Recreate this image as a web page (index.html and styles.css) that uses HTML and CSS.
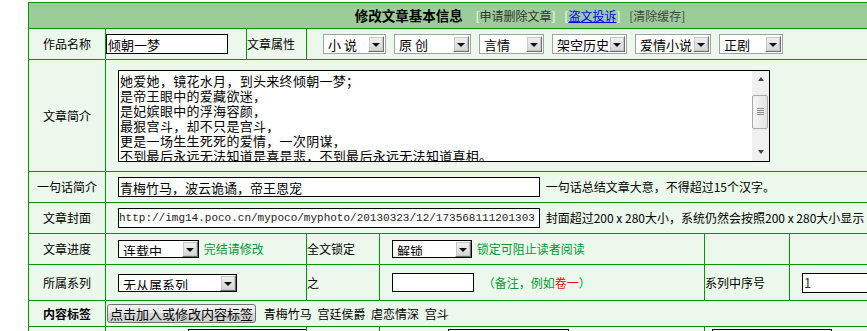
FILE: index.html
```html
<!DOCTYPE html>
<html lang="zh-CN">
<head>
    <meta charset="UTF-8">
    <title>修改文章基本信息</title>
    <link rel="stylesheet" href="styles.css">
</head>
<body>

    <!-- 文章基本信息表单 -->
    <table class="edit">
        <colgroup>
            <col class="c1"><col class="c2"><col class="c3"><col class="c4"><col class="c5"><col class="c6"><col class="c7">
        </colgroup>

        <tr class="head">
            <td colspan="7">
                <b class="title">修改文章基本信息</b>
                <span class="hlink"><i>[</i>申请删除文章<i>]</i></span>
                <span class="hlink"><i>[</i><a href="#">盗文投诉</a><i>]</i></span>
                <span class="hlink dark">[清除缓存]</span>
            </td>
        </tr>

        <tr class="r1">
            <th>作品名称</th>
            <td><input type="text" class="txt name" value="倾朝一梦"></td>
            <td>文章属性</td>
            <td colspan="4" class="pad16">
                <div class="attrs">
                    <span class="sel soft w63"><select><option>小 说</option></select></span>
                    <span class="sel soft w77"><select><option>原 创</option></select></span>
                    <span class="sel soft w65"><select><option>言情</option></select></span>
                    <span class="sel soft w75"><select><option>架空历史</option></select></span>
                    <span class="sel soft w76"><select><option>爱情小说</option></select></span>
                    <span class="sel soft w64"><select><option>正剧</option></select></span>
                </div>
            </td>
        </tr>

        <tr class="r2">
            <th>文章简介</th>
            <td colspan="6" class="pad12">
                <div class="intro-box">
                    <textarea class="intro">她爱她，镜花水月，到头来终倾朝一梦；
是帝王眼中的爱藏欲迷，
是妃嫔眼中的浮海容颜，
最狠宫斗，却不只是宫斗，
更是一场生生死死的爱情，一次阴谋，
不到最后永远无法知道是喜是悲，不到最后永远无法知道真相。</textarea>
                    <!-- barra de desplazamiento clásica -->
                    <div class="vbar">
                        <span class="arrow up"></span>
                        <div class="track"><div class="thumb"><i></i><i></i><i></i><i></i></div></div>
                        <span class="arrow down"></span>
                    </div>
                </div>
            </td>
        </tr>

        <tr class="r3">
            <th>一句话简介</th>
            <td colspan="6" class="pad12">
                <input type="text" class="txt wide" value="青梅竹马，波云诡谲，帝王恩宠">
                <span class="note">一句话总结文章大意，不得超过15个汉字。</span>
            </td>
        </tr>

        <tr class="r3">
            <th>文章封面</th>
            <td colspan="6" class="pad12">
                <input type="text" class="txt wide url" value="http://img14.poco.cn/mypoco/myphoto/20130323/12/173568111201303">
                <span class="note">封面超过200 x 280大小，系统仍然会按照200 x 280大小显示</span>
            </td>
        </tr>

        <tr class="r3">
            <th>文章进度</th>
            <td colspan="2" class="pad12">
                <span class="sel w81"><select><option>连载中</option></select></span>
                <span class="green">完结请修改</span>
            </td>
            <td>全文锁定</td>
            <td class="pad12">
                <span class="sel w80"><select><option>解锁</option></select></span>
                <span class="green">锁定可阻止读者阅读</span>
            </td>
            <td></td>
            <td></td>
        </tr>

        <tr class="r6">
            <th>所属系列</th>
            <td colspan="2" class="pad12">
                <span class="sel w119"><select><option>无从属系列</option></select></span>
            </td>
            <td>之</td>
            <td class="pad12">
                <input type="text" class="txt vol">
                <span class="green ml">（备注，例如<em>卷一</em>）</span>
            </td>
            <td>系列中序号</td>
            <td class="pad12"><input type="text" class="txt num" value="1"></td>
        </tr>

        <tr class="r7">
            <th class="bold">内容标签</th>
            <td colspan="6" class="pad1">
                <button type="button">点击加入或修改内容标签</button>
                <span class="tags">青梅竹马 宫廷侯爵 虐恋情深 宫斗</span>
            </td>
        </tr>

        <tr class="r8">
            <th></th>
            <td colspan="2"><input type="text" class="txt b1"></td>
            <td></td>
            <td><input type="text" class="txt b2"></td>
            <td colspan="2"><input type="text" class="txt b3"></td>
        </tr>
    </table>

</body>
</html>
```

FILE: styles.css
```css
html, body {
    margin: 0;
    overflow: hidden;
}

body {
    background-color: #fff;
    padding: 2px 0 0 28px;
    font-family: "Noto Sans CJK SC", "Liberation Sans", sans-serif;
    font-size: 12px;
    line-height: 16px;
    color: #000;
}

/* Tabla principal */
.edit {
    border-collapse: collapse;
    table-layout: fixed;
    width: 989px;
    background-color: #edf8ec;
}

.c1 { width: 77px; }
.c2 { width: 141px; }
.c3 { width: 60px; }
.c4 { width: 73px; }
.c5 { width: 325px; }
.c6 { width: 85px; }
.c7 { width: 228px; }

.edit td, .edit th {
    border: 1px solid #009900;
    padding: 0;
    font-weight: normal;
    text-align: left;
    vertical-align: middle;
    white-space: nowrap;
    overflow: hidden;
}

.edit th {
    text-align: center;
}

.edit th.bold {
    font-weight: bold;
}

.pad1 { padding-left: 1px !important; }
.pad12 { padding-left: 12px !important; }
.pad16 { padding-left: 16px !important; }

/* Filas */
.head td {
    height: 25px;
    background-color: #9ccc99;
    text-align: center;
}

.r1 td, .r1 th { height: 30px; }
.r2 td, .r2 th { height: 111px; }
.r3 td, .r3 th { height: 30px; }
.r6 td, .r6 th { height: 35px; }
.r7 td, .r7 th { height: 25px; }
.r8 td, .r8 th {
    height: 20px;
    vertical-align: top;
    padding-top: 2px;
}

/* Cabecera */
.title {
    font-size: 13.5px;
    margin-right: 10px;
}

.hlink {
    color: #333;
    margin-right: 6px;
}

.hlink i {
    font-style: normal;
    color: #fff;
}

.hlink a {
    color: #0000ff;
}

.hlink.dark {
    color: #444;
}

/* Campos */
.txt {
    box-sizing: border-box;
    height: 20px;
    border: 1px solid #000;
    padding: 0 1px;
    margin: 0;
    font-family: "Noto Sans CJK SC", sans-serif;
    font-size: 13px;
    background-color: #fff;
    vertical-align: middle;
}

.name { width: 122px; }
.wide { width: 422px; }
.vol { width: 82px; height: 19px; }
.num { width: 120px; color: #333; }
.b1 { width: 120px; margin-left: 82px; }
.b2 { width: 121px; margin-left: 68px; }
.b3 { width: 120px; margin-left: 7px; }

.url {
    font-family: "Liberation Mono", monospace;
    font-size: 11px;
    color: #222;
    padding: 0;
}

.note {
    margin-left: 3px;
    vertical-align: middle;
}

.green {
    color: #009933;
    margin-left: 2px;
    vertical-align: middle;
}

.green.ml {
    margin-left: 6px;
}

.green em {
    font-style: normal;
    color: #ff0000;
}

/* Área de texto del resumen */
.intro-box {
    position: relative;
    width: 652px;
    height: 92px;
}

.intro {
    box-sizing: border-box;
    display: block;
    width: 100%;
    height: 100%;
    margin: 0;
    border: 1px solid #000;
    padding: 2px 18px 0 1px;
    font-family: "Noto Sans CJK SC", sans-serif;
    font-size: 13px;
    line-height: 15px;
    letter-spacing: 0.3px;
    resize: none;
    overflow: hidden;
    background-color: #fff;
}

.vbar {
    position: absolute;
    top: 1px;
    right: 1px;
    bottom: 1px;
    width: 17px;
    display: flex;
    flex-direction: column;
    background-color: #f0f0f0;
}

.arrow {
    height: 17px;
    flex: none;
    display: flex;
    align-items: center;
    justify-content: center;
}

.arrow::before {
    content: "";
    border-style: solid;
    border-color: transparent;
}

.arrow.up::before {
    border-width: 0 3px 4px 3px;
    border-bottom-color: #444;
}

.arrow.down::before {
    border-width: 4px 3px 0 3px;
    border-top-color: #444;
}

.track {
    flex: 1;
    padding-top: 7px;
}

.thumb {
    box-sizing: border-box;
    height: 34px;
    margin: 0 1px 0 0;
    border: 1px solid #a9a9a9;
    border-radius: 2px;
    background: linear-gradient(to right, #f6f6f6, #e4e4e4);
    display: flex;
    flex-direction: column;
    justify-content: center;
    align-items: center;
    gap: 1px;
}

.thumb i {
    display: block;
    width: 7px;
    height: 1px;
    background-color: #8c8c8c;
}

/* Selectores al estilo clásico */
.attrs {
    display: flex;
    gap: 8px;
}

.sel {
    position: relative;
    display: inline-block;
    vertical-align: middle;
}

.sel select {
    -webkit-appearance: none;
    appearance: none;
    box-sizing: border-box;
    width: 100%;
    height: 18px;
    margin: 0;
    padding: 0 0 1px 4px;
    border: 1px solid #000;
    border-radius: 0;
    background-color: #fff;
    font-family: "Noto Sans CJK SC", sans-serif;
    font-size: 13px;
    color: #000;
    display: block;
}

.sel::after {
    content: "";
    position: absolute;
    top: 1px;
    right: 1px;
    width: 16px;
    height: 16px;
    box-sizing: border-box;
    background: linear-gradient(#f2f2f2, #d4d4d4);
    border: 1px solid;
    border-color: #fff #6f6f6f #6f6f6f #fff;
    outline: 1px solid #c8c8c8;
    outline-offset: -2px;
}

.sel::before {
    content: "";
    position: absolute;
    z-index: 1;
    top: 8px;
    right: 5px;
    border-style: solid;
    border-width: 4px 4px 0 4px;
    border-color: #111 transparent transparent transparent;
}

.sel.soft select {
    height: 20px;
    border-color: #9aa3aa;
}

.sel.soft::after {
    top: 2px;
    right: 2px;
}

.sel.soft::before {
    top: 9px;
    right: 6px;
}

.w63 { width: 63px; }
.w64 { width: 64px; }
.w65 { width: 65px; }
.w75 { width: 75px; }
.w76 { width: 76px; }
.w77 { width: 77px; }
.w80 { width: 80px; }
.w81 { width: 81px; }
.w119 { width: 119px; }

/* Botón de etiquetas */
button {
    height: 19px;
    padding: 0 2px;
    margin: 0;
    border: 1px solid #707070;
    border-radius: 3px;
    background: linear-gradient(#f2f2f2, #e6e6e6 50%, #d8d8d8 50%, #cdcdcd);
    font-family: "Noto Sans CJK SC", sans-serif;
    font-size: 13px;
    line-height: 15px;
    color: #000;
    vertical-align: middle;
}

.tags {
    margin-left: 5px;
    word-spacing: 3px;
    vertical-align: middle;
}
```
